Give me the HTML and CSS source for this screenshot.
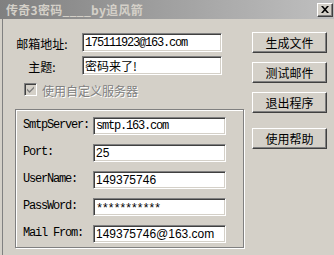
FILE: index.html
```html
<!DOCTYPE html>
<html>
<head>
<meta charset="utf-8">
<link rel="stylesheet" href="styles.css">
</head>
<body>
<div class="window">
  <div class="titlebar">
    <span class="title">传奇3密码____by追风箭</span>
    <span class="close">
      <svg width="8" height="7" viewBox="0 0 8 7"><path d="M0 0h2l2 2.2L6 0h2L5 3.5 8 7H6L4 4.8 2 7H0l3-3.5z" fill="#000"/></svg>
    </span>
  </div>
  <div class="client">
    <div class="form">
      <div class="row row-first">
        <span class="label">邮箱地址:</span>
        <div class="field wide mono">175111923@163.com</div>
      </div>
      <div class="row">
        <span class="label">主题:</span>
        <div class="field wide cjk">密码来了!</div>
      </div>
      <div class="check-row">
        <span class="checkbox">
          <svg width="9" height="9" viewBox="0 0 9 9"><path d="M1 3.5l2.5 2.5L8 1.5v2L3.5 8 1 5.5z" fill="#808080"/></svg>
        </span>
        <span class="check-label">使用自定义服务器</span>
      </div>
      <div class="group">
        <div class="grow"><span class="glabel">SmtpServer:</span><div class="field gfield mono">smtp.163.com</div></div>
        <div class="grow"><span class="glabel">Port:</span><div class="field gfield sans">25</div></div>
        <div class="grow"><span class="glabel">UserName:</span><div class="field gfield sans">149375746</div></div>
        <div class="grow"><span class="glabel">PassWord:</span><div class="field gfield mono pw">***********</div></div>
        <div class="grow"><span class="glabel">Mail From:</span><div class="field gfield sans">149375746@163.com</div></div>
      </div>
    </div>
    <div class="buttons">
      <div class="btn">生成文件</div>
      <div class="btn">测试邮件</div>
      <div class="btn">退出程序</div>
      <div class="btn btn-help">使用帮助</div>
    </div>
  </div>
</div>
</body>
</html>
```
FILE: styles.css
```css
html, body {
  margin: 0;
  padding: 0;
}
body {
  width: 334px;
  height: 255px;
  overflow: hidden;
  background: #d4d0c8;
  font-family: "Noto Sans CJK SC", "Liberation Sans", sans-serif;
  font-size: 12px;
  color: #000;
}
.window {
  width: 334px;
  height: 255px;
  display: flex;
  flex-direction: column;
}
.titlebar {
  height: 19px;
  flex: none;
  background: linear-gradient(to right, #808080, #c0c0c0);
  display: flex;
  align-items: center;
  justify-content: space-between;
  padding-left: 6px;
  padding-right: 1px;
  box-sizing: border-box;
}
.title {
  color: #d4d0c8;
  font-weight: bold;
  font-size: 12px;
  line-height: 14px;
  letter-spacing: 0.3px;
}
.close {
  width: 16px;
  height: 14px;
  box-sizing: border-box;
  background: #d4d0c8;
  border: 1px solid;
  border-color: #fff #404040 #404040 #fff;
  box-shadow: inset -1px -1px 0 #808080;
  display: flex;
  align-items: center;
  justify-content: center;
}
.client {
  flex: 1;
  display: flex;
  margin-left: 2px;
  border-left: 1px solid #808080;
}
.form {
  width: 241px;
  display: flex;
  flex-direction: column;
}
.row {
  display: flex;
  align-items: center;
  margin-top: 4px;
}
.row-first {
  margin-top: 14px;
}
.label {
  width: 64px;
  margin-left: 7px;
  margin-right: 8px;
  text-align: center;
  line-height: 14px;
  padding-top: 2px;
}
.field {
  box-sizing: border-box;
  background: #fff;
  border: 1px solid;
  border-color: #808080 #fff #fff #808080;
  box-shadow: inset 1px 1px 0 #404040, inset -1px -1px 0 #d4d0c8;
  padding: 0 2px;
  display: flex;
  align-items: center;
  white-space: nowrap;
  overflow: hidden;
}
.wide {
  width: 140px;
  height: 19px;
}
.mono {
  font-family: "Liberation Mono", monospace;
  font-size: 12px;
  letter-spacing: -1.2px;
}
.sans {
  font-family: "Liberation Sans", sans-serif;
  font-size: 12px;
}
.cjk {
  font-size: 12px;
}
.pw {
  letter-spacing: -1.4px;
  padding-top: 3px;
}
.check-row {
  display: flex;
  align-items: center;
  margin-top: 8px;
  padding-left: 21px;
  height: 13px;
}
.checkbox {
  width: 13px;
  height: 13px;
  box-sizing: border-box;
  background: #d4d0c8;
  border: 1px solid;
  border-color: #808080 #fff #fff #808080;
  box-shadow: inset 1px 1px 0 #404040, inset -1px -1px 0 #d4d0c8;
  display: flex;
  align-items: center;
  justify-content: center;
}
.check-label {
  margin-left: 5px;
  color: #808080;
  text-shadow: 1px 1px 0 #fff;
  line-height: 14px;
  padding-top: 2px;
}
.group {
  margin-top: 13px;
  margin-left: 12px;
  width: 229px;
  height: 139px;
  box-sizing: border-box;
  border: 1px solid #808080;
  box-shadow: inset 1px 1px 0 #fff, 1px 1px 0 #fff;
  display: flex;
  flex-direction: column;
  gap: 9px;
  padding-top: 7px;
}
.grow {
  display: flex;
  align-items: center;
}
.glabel {
  width: 70px;
  margin-left: 7px;
  font-family: "Liberation Mono", monospace;
  font-size: 12px;
  letter-spacing: -1.2px;
  padding-bottom: 3px;
}
.gfield {
  width: 133px;
  height: 18px;
}
.buttons {
  display: flex;
  flex-direction: column;
  margin-left: 8px;
  padding-top: 13px;
  gap: 9px;
}
.btn {
  width: 75px;
  height: 21px;
  box-sizing: border-box;
  border: 1px solid;
  border-color: #fff #404040 #404040 #fff;
  box-shadow: inset -1px -1px 0 #808080;
  display: flex;
  align-items: center;
  justify-content: center;
  font-size: 12px;
}
.btn-help {
  margin-top: 6px;
}
```
